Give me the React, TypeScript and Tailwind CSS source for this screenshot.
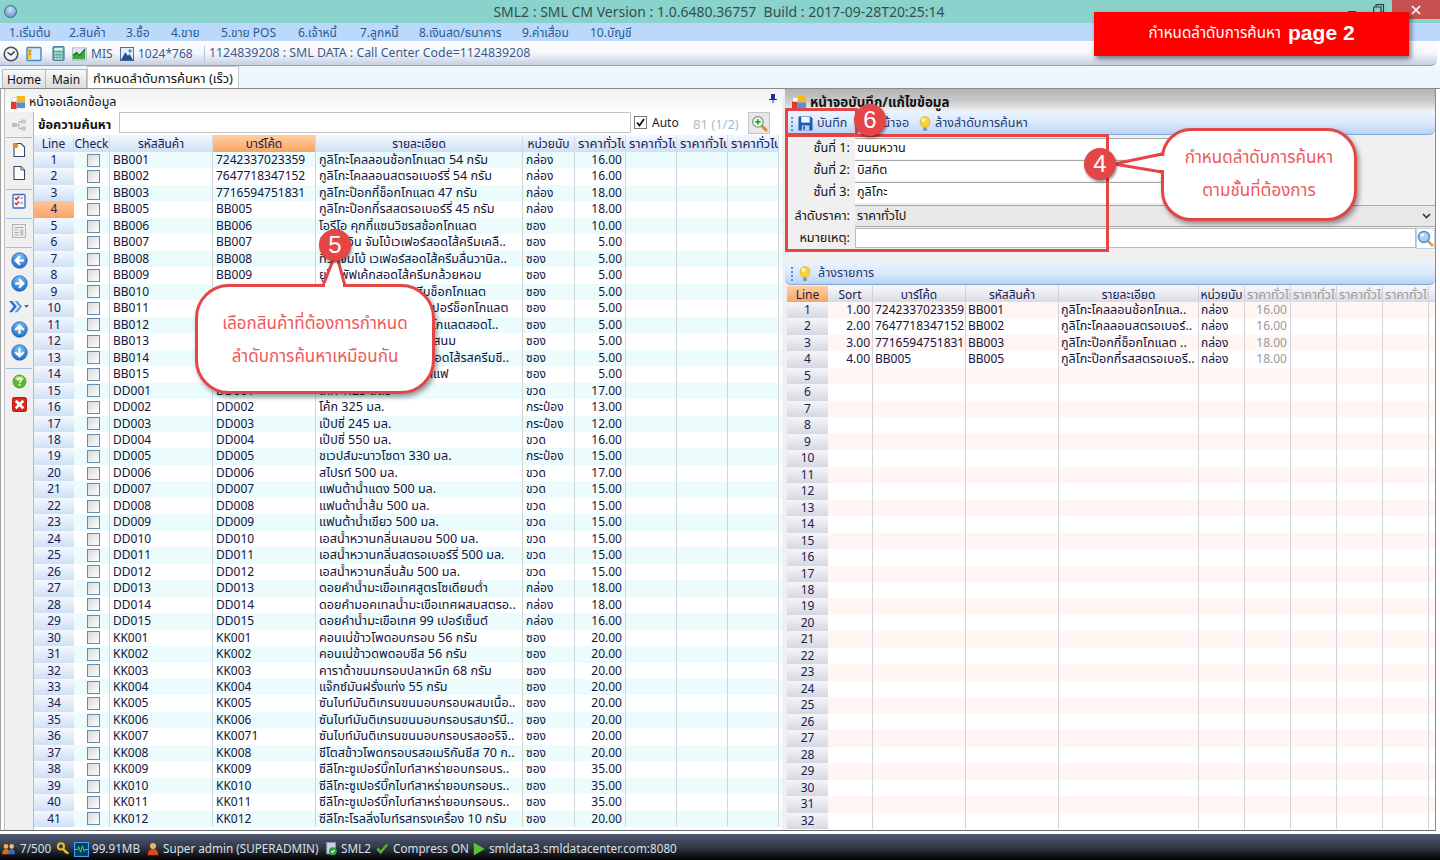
import React from "react";

const Svg = ({ s = 16, children }: { s?: number; children: React.ReactNode }) => (
  <svg width={s} height={s} viewBox="0 0 16 16" className="shrink-0 block">{children}</svg>
);
const Squares = () => (
  <Svg s={15}>
    <rect x="0" y="7" width="6" height="8" fill="#e03a2a" />
    <rect x="6" y="1" width="9" height="7" fill="#f4b820" />
    <rect x="6" y="8" width="9" height="6" fill="#5a8fdc" />
    <rect x="1" y="3" width="5" height="4" fill="#fff" stroke="#ccc" strokeWidth="0.5" />
  </Svg>
);
const Clock = () => (
  <Svg s={16}>
    <circle cx="8" cy="8" r="6.8" fill="#eef2f6" stroke="#44505c" strokeWidth="1.6" />
    <path d="M4.5 6.5 8 9l3.5-3.5" fill="none" stroke="#222" strokeWidth="1.2" />
  </Svg>
);
const PanelIcon = () => (
  <Svg s={16}>
    <rect x="1" y="1.5" width="14" height="13" rx="1" fill="#dcebfb" stroke="#3a8ad0" strokeWidth="1.4" />
    <rect x="2" y="3" width="3.6" height="10.5" fill="#f6c83c" />
    <circle cx="3.8" cy="5" r="0.8" fill="#c03020" />
    <circle cx="3.8" cy="8" r="0.8" fill="#c03020" />
  </Svg>
);
const Calc = () => (
  <Svg s={15}>
    <rect x="2" y="0.5" width="12" height="15" rx="1" fill="#5aa8a8" stroke="#4a7a9a" />
    <rect x="3.5" y="2" width="9" height="3" fill="#d8f0f0" />
    <path d="M4 7h2v1.5H4zM7 7h2v1.5H7zM10 7h2v1.5h-2zM4 10h2v1.5H4zM7 10h2v1.5H7zM10 10h2v1.5h-2zM4 12.8h2v1.5H4zM7 12.8h2v1.5H7zM10 12.8h2v1.5h-2z" fill="#e8f4d8" />
  </Svg>
);
const ChartI = () => (
  <Svg s={15}>
    <rect x="0.5" y="2" width="15" height="13" fill="#dfe8f2" stroke="#8a9ab0" strokeWidth="0.6" />
    <path d="M1 14V10l4-3 3 3 6-7v11z" fill="#3da83a" />
    <path d="M1 10l4-3 3 3 6-7" fill="none" stroke="#1d6d1c" strokeWidth="1.4" />
  </Svg>
);
const PicI = () => (
  <Svg s={14}>
    <rect x="0.5" y="0.5" width="15" height="15" fill="#e4eef9" stroke="#3c5c92" />
    <path d="M1 15 6 6l3 4 2-2 4 7z" fill="#2a4f90" />
    <circle cx="11.5" cy="4.5" r="2" fill="#5b8fd0" />
  </Svg>
);
const Net = () => (
  <Svg s={16}>
    <path d="M5 8h3M10 4.5H8v7h2" fill="none" stroke="#b0b0b0" />
    <rect x="1" y="6" width="5" height="4" fill="#bdbdbd" />
    <rect x="10" y="2.5" width="5" height="4" fill="#c8c8c8" />
    <rect x="10" y="9.5" width="5" height="4" fill="#c8c8c8" />
  </Svg>
);
const DocStar = () => (
  <Svg s={16}>
    <path d="M3 1.5h7l3.5 3.5v9.5H3z" fill="#fdfdf6" stroke="#334a70" strokeWidth="1.1" />
    <circle cx="4.5" cy="3.5" r="2.6" fill="#ef8a1e" />
  </Svg>
);
const Doc = () => (
  <Svg s={16}>
    <path d="M3 1.5h7l3.5 3.5v9.5H3z" fill="#fdfdfd" stroke="#334a70" strokeWidth="1.1" />
    <path d="M10 1.5V5h3.5" fill="#dfe6f0" stroke="#334a70" strokeWidth="0.9" />
  </Svg>
);
const Check = () => (
  <Svg s={16}>
    <rect x="2" y="1.5" width="12" height="13.5" rx="1" fill="#f6f6ff" stroke="#3a6ac0" strokeWidth="1.3" />
    <path d="M4 5l1.5 1.5L8 3.6M4 10l1.5 1.5L8 8.6" fill="none" stroke="#d8261e" strokeWidth="1.5" />
    <path d="M9 5h3M9 10h3" stroke="#6a7a9a" />
  </Svg>
);
const FormI = () => (
  <Svg s={16}>
    <rect x="1.5" y="1.5" width="13" height="13" fill="#f0f0f0" stroke="#b4b4b4" />
    <path d="M3.5 4h9v1h-9zM3.5 6.5h4v1h-4zM3.5 9h4v1h-4zM3.5 11.5h4v1h-4z" fill="#a8a8a8" />
    <rect x="9" y="6.5" width="3.5" height="6" fill="#c4c4c4" />
  </Svg>
);
const ArrowC = ({ d }: { d: string }) => (
  <Svg s={17}>
    <defs>
      <radialGradient id="abl" cx="50%" cy="25%" r="85%">
        <stop offset="0" stopColor="#7fc4fa" />
        <stop offset="1" stopColor="#0f5fc0" />
      </radialGradient>
    </defs>
    <circle cx="8" cy="8" r="7.3" fill="url(#abl)" stroke="#1a4f96" strokeWidth="0.6" />
    <path d={d} fill="none" stroke="#fff" strokeWidth="2.2" />
  </Svg>
);
const Dbl = () => (
  <div className="flex items-center ml-[-2px]">
    <Svg s={15}>
      <path d="M1 2h3.5l5 6-5 6H1l5-6z" fill="#2d6fd0" />
      <path d="M7 2h3l5 6-5 6H7l5-6z" fill="#5d9ae6" />
    </Svg>
    <svg width="5" height="3" className="ml-[1px]"><path d="M0 0h5L2.5 3z" fill="#5a6a88" /></svg>
  </div>
);
const Help = () => (
  <Svg s={15}>
    <circle cx="8" cy="8" r="7" fill="#5cb82e" stroke="#3a8a1c" strokeWidth="0.6" />
    <ellipse cx="8" cy="4.8" rx="4.5" ry="2.5" fill="#b4e690" />
    <path d="M6 6.5c0-2.5 4-2.5 4 0 0 1.5-2 1.5-2 3" fill="none" stroke="#fff" strokeWidth="1.4" />
    <circle cx="8" cy="11.5" r="1" fill="#fff" />
  </Svg>
);
const XI = () => (
  <Svg s={15}>
    <rect x="0.5" y="0.5" width="15" height="15" rx="2" fill="#e0261e" stroke="#a8140e" />
    <path d="M4 4l8 8M12 4l-8 8" stroke="#fff" strokeWidth="2.8" />
  </Svg>
);
const Floppy = () => (
  <Svg s={15}>
    <path d="M0.5 0.5h13l2 2v13H.5z" fill="#1e5cb8" />
    <rect x="3.5" y="1" width="9" height="6" fill="#f4f8ff" />
    <rect x="4" y="10" width="8" height="5.5" fill="#b8d0f0" />
    <rect x="5.5" y="11" width="2" height="3.5" fill="#1e5cb8" />
  </Svg>
);
const Bulb = () => (
  <Svg s={16}>
    <ellipse cx="8" cy="6" rx="5" ry="5.5" fill="#f8d23a" stroke="#dca818" strokeWidth="0.6" />
    <ellipse cx="6.5" cy="4" rx="2" ry="2" fill="#fff4b0" />
    <rect x="6" y="11.5" width="4" height="3.5" rx="0.8" fill="#8d96a8" />
  </Svg>
);
const Dots = () => (
  <div className="flex flex-col gap-[2px] w-[2px] shrink-0">
    {[0, 1, 2, 3].map((i) => (
      <span key={i} className="w-[2px] h-[2px] bg-[#5a8ed8] block" />
    ))}
  </div>
);
const Zoom = () => (
  <Svg s={17}>
    <path d="M9.5 9.5 15 15" stroke="#d88a28" strokeWidth="2.6" />
    <circle cx="6.5" cy="6.5" r="5" fill="#e8f8e8" stroke="#7a9a8a" strokeWidth="1.2" />
    <path d="M6.5 4v5M4 6.5h5" stroke="#1ea82a" strokeWidth="1.6" />
  </Svg>
);
const Glass = () => (
  <Svg s={17}>
    <path d="M10 10l5 5" stroke="#e0a040" strokeWidth="2.6" />
    <circle cx="6.5" cy="6.5" r="5.2" fill="#a8d0f4" stroke="#5a8cc8" strokeWidth="1.4" />
    <ellipse cx="5" cy="4.5" rx="2" ry="1.5" fill="#eef7ff" />
  </Svg>
);
const Users = () => (
  <Svg s={14}>
    <circle cx="4.5" cy="5" r="2.6" fill="#f2b448" />
    <path d="M0 14c0-4 2-6 4.500-6S9 10 9 14z" fill="#d86a20" />
    <circle cx="11" cy="5" r="2.6" fill="#f0c078" />
    <path d="M7 14c0-4 2-6 4-6s4 2 4 6z" fill="#3a6ab8" />
  </Svg>
);
const Key = () => (
  <Svg s={14}>
    <circle cx="4.5" cy="5" r="3.5" fill="none" stroke="#f0c020" strokeWidth="2.2" />
    <path d="M7 6.5l7 6-1.500 1.500-1.500-1-1 0.500-3.500-4z" fill="#f0b820" />
  </Svg>
);
const Monitor = () => (
  <Svg s={15}>
    <rect x="0.5" y="0.5" width="15" height="15" fill="#0a3a5a" stroke="#3aa0ff" strokeWidth="1.4" />
    <path d="M1 8h3l1-3 2 6 2-7 2 6 1-2h3" fill="none" stroke="#3ce070" />
  </Svg>
);
const UserI = () => (
  <Svg s={14}>
    <circle cx="8" cy="4.5" r="3.5" fill="#f0b070" />
    <path d="M2 15c0-5 2.500-7 6-7s6 2 6 7z" fill="#d8481e" />
  </Svg>
);
const DocOk = () => (
  <Svg s={14}>
    <rect x="2" y="0.5" width="10" height="13" fill="#c8d4e8" stroke="#8a9ab8" />
    <circle cx="9" cy="10.5" r="4.5" fill="#2aa040" />
    <path d="M7 10.5l1.500 1.500 2.500-3" fill="none" stroke="#fff" strokeWidth="1.2" />
  </Svg>
);
const CheckG = () => (
  <Svg s={14}>
    <path d="M1.5 8.5 4 6.500l2.500 3L13 2l2 1.500L6.500 14z" fill="#5cb034" />
  </Svg>
);
const Play = () => (
  <Svg s={14}>
    <path d="M2 0.5 14.500 8 2 15.500z" fill="#58c030" />
  </Svg>
);

const menu: [string, string][] = [
  ["1.เริ่มต้น", "w-[60px]"],
  ["2.สินค้า", "w-[57px]"],
  ["3.ซื้อ", "w-[45px]"],
  ["4.ขาย", "w-[50px]"],
  ["5.ขาย POS", "w-[77px]"],
  ["6.เจ้าหนี้", "w-[62px]"],
  ["7.ลูกหนี้", "w-[59px]"],
  ["8.เงินสด/ธนาคาร", "w-[103px]"],
  ["9.ค่าเสื่อม", "w-[68px]"],
  ["10.บัญชี", "w-[60px]"],
];

type Row = [string, string, string, string, string];
const bb = (c: string, d: string, p = "5.00", u = "ซอง", b?: string): Row => [c, b ?? c, d, u, p];
const rows: Row[] = [
  bb("BB001", "กูลิโกะโคลลอนช้อกโกแลต 54 กรัม", "16.00", "กล่อง", "7242337023359"),
  bb("BB002", "กูลิโกะโคลลอนสตรอเบอร์รี่ 54 กรัม", "16.00", "กล่อง", "7647718347152"),
  bb("BB003", "กูลิโกะป๊อกกี้ช็อกโกแลต 47 กรัม", "18.00", "กล่อง", "7716594751831"),
  bb("BB005", "กูลิโกะป๊อกกี้รสสตรอเบอร์รี่ 45 กรัม", "18.00", "กล่อง"),
  bb("BB006", "โอรีโอ คุกกี้แซนวิชรสช้อกโกแลต", "10.00"),
  bb("BB007", "ทิวลี่ทวิน จัมโบ้เวเฟอร์สอดไส้ครีมเคลื.."),
  bb("BB008", "ทิวลี่จัมโบ้ เวเฟอร์สอดไส้ครีมลื่นวานิล.."),
  bb("BB009", "ยูโร่ พัฟเค้กสอดไส้ครีมกล้วยหอม"),
  bb("BB010", "ยูโร่ พัฟเค้กสอดไส้ครีมช็อกโกแลต"),
  bb("BB011", "ยูโร่ คัสตาร์ดเค้กรสซุปเปอร์ช็อกโกแลต"),
  bb("BB012", "ทิวลี่เวเฟอร์ม้วนรสช็อกโกแลตสอดไ.."),
  bb("BB013", "เบรคโก้ เวเฟอร์สอดไส้รสนม"),
  bb("BB014", "เบรคโก้ เวเฟอร์เคลือบสอดไส้รสครีมชี.."),
  bb("BB015", "เบรคโก้ เวเฟอร์ไส้นมกาแฟ"),
  bb("DD001", "โค้ก 1.25 ลิตร", "17.00", "ขวด"),
  bb("DD002", "โค้ก 325 มล.", "13.00", "กระป๋อง"),
  bb("DD003", "เป๊ปซี่ 245 มล.", "12.00", "กระป๋อง"),
  bb("DD004", "เป๊ปซี่ 550 มล.", "16.00", "ขวด"),
  bb("DD005", "ชเวปส์มะนาวโซดา 330 มล.", "15.00", "กระป๋อง"),
  bb("DD006", "สไปรท์ 500 มล.", "17.00", "ขวด"),
  bb("DD007", "แฟนต้าน้ำแดง 500 มล.", "15.00", "ขวด"),
  bb("DD008", "แฟนต้าน้ำส้ม 500 มล.", "15.00", "ขวด"),
  bb("DD009", "แฟนต้าน้ำเขียว 500 มล.", "15.00", "ขวด"),
  bb("DD010", "เอสน้ำหวานกลิ่นเลมอน 500 มล.", "15.00", "ขวด"),
  bb("DD011", "เอสน้ำหวานกลิ่นสตรอเบอร์รี่ 500 มล.", "15.00", "ขวด"),
  bb("DD012", "เอสน้ำหวานกลิ่นส้ม 500 มล.", "15.00", "ขวด"),
  bb("DD013", "ดอยคำน้ำมะเขือเทศสูตรโซเดียมต่ำ", "18.00", "กล่อง"),
  bb("DD014", "ดอยคำมอคเทลน้ำมะเขือเทศผสมสตรอ..", "18.00", "กล่อง"),
  bb("DD015", "ดอยคำน้ำมะเขือเทศ 99 เปอร์เซ็นต์", "16.00", "กล่อง"),
  bb("KK001", "คอนเน่ข้าวโพดอบกรอบ 56 กรัม", "20.00"),
  bb("KK002", "คอนเน่ข้าวดพดอบชีส 56 กรัม", "20.00"),
  bb("KK003", "คาราด้าขนมกรอบปลาหมึก 68 กรัม", "20.00"),
  bb("KK004", "แจ๊กซ์มันฝรั่งแท่ง 55 กรัม", "20.00"),
  bb("KK005", "ซันไบท์มันติเกรนขนมอบกรอบผสมเนื้อ..", "20.00"),
  bb("KK006", "ซันไบท์มันติเกรนขนมอบกรอบรสบาร์บี..", "20.00"),
  bb("KK007", "ซันไบท์มันติเกรนขนมอบกรอบรสออริจิ..", "20.00", "ซอง", "KK0071"),
  bb("KK008", "ชีโตสข้าวโพดกรอบรสอเมริกันชีส 70 ก..", "20.00"),
  bb("KK009", "ซีลีโกะซูเปอร์บิ๊กไบท์สาหร่ายอบกรอบร..", "35.00"),
  bb("KK010", "ซีลีโกะซูเปอร์บิ๊กไบท์สาหร่ายอบกรอบร..", "35.00"),
  bb("KK011", "ซีลีโกะซูเปอร์บิ๊กไบท์สาหร่ายอบกรอบร..", "35.00"),
  bb("KK012", "ซีลีโกะโรลลิ่งไบท์รสทรงเครื่อง 10 กรัม", "20.00"),
];

const rRows = [
  ["1.00", "7242337023359", "BB001", "กูลิโกะโคลลอนช้อกโกแล..", "กล่อง", "16.00"],
  ["2.00", "7647718347152", "BB002", "กูลิโกะโคลลอนสตรอเบอร์..", "กล่อง", "16.00"],
  ["3.00", "7716594751831", "BB003", "กูลิโกะป๊อกกี้ช็อกโกแลต ..", "กล่อง", "18.00"],
  ["4.00", "BB005", "BB005", "กูลิโกะป๊อกกี้รสสตรอเบอรี..", "กล่อง", "18.00"],
];

const lh = "border-r border-[#d0dbe8] bg-gradient-to-b from-[#f4f8fe] to-[#cfe0f5] text-[#1a2050] text-center overflow-hidden whitespace-nowrap shrink-0 leading-[17px]";
const lhp = "border-r border-[#d0dbe8] bg-gradient-to-b from-[#f4f8fe] to-[#cfe0f5] text-[#1a2050] overflow-hidden whitespace-nowrap shrink-0 leading-[17px] text-[13px] pl-[3px]";
const LeftHead = () => (
  <div className="flex h-[17px] text-[12px]">
    <div className={`${lh} w-[40px]`}>Line</div>
    <div className={`${lh} w-[36px]`}>Check</div>
    <div className={`${lh} w-[103px]`}>รหัสสินค้า</div>
    <div className="w-[103px] shrink-0 text-center bg-gradient-to-b from-[#ffcf9e] to-[#f7a566] text-[#1a2050] leading-[17px] border-r border-[#d0dbe8]">บาร์โค้ด</div>
    <div className={`${lh} w-[207px]`}>รายละเอียด</div>
    <div className={`${lh} w-[52px]`}>หน่วยนับ</div>
    <div className={`${lhp} w-[51px]`}>ราคาทั่วไป</div>
    <div className={`${lhp} w-[51px]`}>ราคาทั่วไป</div>
    <div className={`${lhp} w-[51px]`}>ราคาทั่วไป</div>
    <div className={`${lhp} w-[51px]`}>ราคาทั่วไป</div>
  </div>
);

const LeftRow = ({ r, i }: { r: Row; i: number }) => {
  const tint = i % 2 === 0 ? "bg-[#ecfcfd]" : "bg-white";
  const cell = "border-r border-[#cfd6dc] overflow-hidden whitespace-nowrap shrink-0 pl-[3px] leading-[16px]";
  return (
    <div className={`flex h-[16.475px] text-[12px] text-[#14143c] ${tint}`}>
      <div className={`w-[40px] shrink-0 text-center leading-[16px] text-[#1a2050] ${i === 3 ? "bg-gradient-to-b from-[#ffc596] to-[#f7a56a]" : "bg-gradient-to-b from-[#f4f8fe] to-[#cfe0f5]"}`}>{i + 1}</div>
      <div className="w-[36px] shrink-0 flex items-center justify-center border-r border-[#cfd6dc] pl-[3px]">
        <span className="w-[13px] h-[13px] border border-[#6b8aa8] bg-gradient-to-br from-[#d8d8d8] to-white block" />
      </div>
      <div className={`${cell} w-[103px]`}>{r[0]}</div>
      <div className={`${cell} w-[103px]`}>{r[1]}</div>
      <div className={`${cell} w-[207px] text-[12.6px]`}>{r[2]}</div>
      <div className={`${cell} w-[52px]`}>{r[3]}</div>
      <div className={`${cell} w-[51px] text-right pr-[3px]`}>{r[4]}</div>
      <div className={`${cell} w-[51px]`} />
      <div className={`${cell} w-[51px]`} />
      <div className={`${cell} w-[51px]`} />
    </div>
  );
};

const rh = "border-r border-[#cfd2da] text-center overflow-hidden whitespace-nowrap shrink-0 leading-[17px] text-[#1a2050]";
const rhg = "border-r border-[#cfd2da] overflow-hidden whitespace-nowrap shrink-0 leading-[17px] text-[#9a9a9a] text-[12.6px] pl-[2px]";
const RightHead = () => (
  <div className="flex h-[16px] text-[12px] bg-gradient-to-b from-[#f8f8fb] to-[#d9dce6]">
    <div className="w-[41px] shrink-0 text-center leading-[17px] text-[#1a2050] bg-gradient-to-b from-[#ffcf9e] to-[#f7a566]">Line</div>
    <div className={`${rh} w-[45px]`}>Sort</div>
    <div className={`${rh} w-[93px]`}>บาร์โค้ด</div>
    <div className={`${rh} w-[93px]`}>รหัสสินค้า</div>
    <div className={`${rh} w-[140px]`}>รายละเอียด</div>
    <div className={`${rh} w-[46px]`}>หน่วยนับ</div>
    <div className={`${rhg} w-[46px]`}>ราคาทั่วไป</div>
    <div className={`${rhg} w-[46px]`}>ราคาทั่วไป</div>
    <div className={`${rhg} w-[46px]`}>ราคาทั่วไป</div>
    <div className={`${rhg} w-[46px]`}>ราคาทั่วไป</div>
  </div>
);
const RightRow = ({ i }: { i: number }) => {
  const r = rRows[i] ?? ["", "", "", "", "", ""];
  const tint = i % 2 === 0 ? "bg-[#fff6f3]" : "bg-white";
  const cell = "border-r border-[#d4d4d8] overflow-hidden whitespace-nowrap shrink-0 leading-[16px]";
  return (
    <div className={`flex h-[16.48px] text-[12px] text-[#14143c] ${tint}`}>
      <div className="w-[41px] shrink-0 text-center leading-[16px] text-[#1a2050] bg-gradient-to-b from-[#f6f6f9] to-[#d5d8e2]">{i + 1}</div>
      <div className={`${cell} w-[45px] text-right pr-[2px]`}>{r[0]}</div>
      <div className={`${cell} w-[93px] pl-[2px]`}>{r[1]}</div>
      <div className={`${cell} w-[93px] pl-[2px]`}>{r[2]}</div>
      <div className={`${cell} w-[140px] pl-[2px] text-[12.6px]`}>{r[3]}</div>
      <div className={`${cell} w-[46px] pl-[2px]`}>{r[4]}</div>
      <div className={`${cell} w-[46px] text-right pr-[3px] text-[#9a9a9a]`}>{r[5]}</div>
      <div className={`${cell} w-[46px]`} />
      <div className={`${cell} w-[46px]`} />
      <div className={`${cell} w-[46px]`} />
    </div>
  );
};

const SideItem = ({ h, children }: { h: string; children?: React.ReactNode }) => (
  <div className={`${h} flex items-center justify-center shrink-0`}>{children}</div>
);
const Sep = () => <div className="h-[1px] bg-[#9ec0e6] mx-[1px] shrink-0" />;

const FormRow = ({ label, value }: { label: string; value: string }) => (
  <div className="flex items-center h-[22px]">
    <div className="w-[65px] text-right text-[12.7px] text-[#111] pr-[2px] whitespace-nowrap">{label}</div>
    <div className="ml-[3px] w-[315px] h-[21px] bg-white border-t border-[#a9a9a9] pl-[2px] text-[12.6px] leading-[18px] text-[#111]">{value}</div>
  </div>
);

const ToolBlue = ({ children, cls }: { children: React.ReactNode; cls: string }) => (
  <div className={`${cls} flex items-center pt-[1px] bg-gradient-to-b from-[#eaf3ff] via-[#dbe9fc] to-[#b9d2f3] rounded-br-[6px] rounded-bl-[6px] border-b border-[#7fa8dc] text-[12.5px] text-[#1e3a72]`}>
    {children}
  </div>
);

const Circle = ({ n, cls }: { n: string; cls: string }) => (
  <div className={`${cls} absolute w-[32px] h-[32px] rounded-full bg-[#e64545] text-white text-[24px] leading-[32px] text-center font-['Liberation_Sans',sans-serif] shadow-[1px_2px_3px_rgba(0,0,0,0.45)]`}>{n}</div>
);

export default function App() {
  return (
    <div className="relative w-[1440px] h-[860px] overflow-hidden bg-white font-['Noto_Sans','Noto_Sans_Thai','DejaVu_Sans',sans-serif]">
      {/* title */}
      <div className="h-[23px] bg-[#8ad2cc] flex items-center relative">
        <div className="ml-[4px] w-[13px] h-[13px] rounded-full bg-[radial-gradient(circle_at_50%_35%,#cfe2f6,#4f86c0)] border border-[#3f6a96] shrink-0" />
        <div className="absolute left-0 right-0 top-0 text-center text-[14px] leading-[23px] text-[#33504f] ml-[-2px]">SML2 : SML CM Version : 1.0.6480.36757&nbsp; Build : 2017-09-28T20:25:14</div>
        <div className="absolute right-0 top-0 w-[48px] h-[19px] bg-[#c75050] flex items-center justify-center">
          <svg width="10" height="10"><path d="M1 1l8 8M9 1l-8 8" stroke="#fff" strokeWidth="1.6" /></svg>
        </div>
        <svg width="12" height="11" className="absolute left-[1373px] top-[4px]"><path d="M3 3V0.7h7.500V8H8M0.7 3h7.300v7.300H0.7z" fill="none" stroke="#2f3f3f" strokeWidth="1.2" /></svg>
        <div className="absolute left-[1348px] top-[11px] w-[8px] h-[1px] bg-[#2f3f3f]" />
      </div>
      {/* menu */}
      <div className="h-[18px] bg-[#bcd9fb] flex pl-[9px] text-[12px] leading-[20px] text-[#2a5a94]">
        {menu.map(([t, w]) => (
          <div key={t} className={`${w} shrink-0 whitespace-nowrap`}>{t}</div>
        ))}
      </div>
      {/* toolbar */}
      <div className="h-[25px] bg-gradient-to-b from-white via-[#f4f6fa] to-[#c6d0e2] border-b border-[#7aa8e0] rounded-br-[6px] mr-[3px] flex items-center text-[12px] text-[#3a5a8e] pl-[2px] pt-[1px]">
        <div className="w-[18px] flex justify-center"><Clock /></div>
        <div className="ml-[6px]"><PanelIcon /></div>
        <div className="ml-[9px]"><Calc /></div>
        <div className="ml-[6px]"><ChartI /></div>
        <span className="ml-[4px] w-[29px]">MIS</span>
        <PicI />
        <span className="ml-[4px] w-[66px] whitespace-nowrap">1024*768</span>
        <div className="w-[1px] h-[16px] bg-[#b4c4dc] mr-[4px]" />
        <span className="whitespace-nowrap text-[12.35px]">1124839208 : SML DATA : Call Center Code=1124839208</span>
      </div>
      {/* tabs */}
      <div className="h-[23px] bg-[#eef6fe] flex items-end pl-[2px] border-b border-[#8a8a8a] text-[12px] text-[#111]">
        <div className="w-[44px] h-[19px] bg-gradient-to-b from-[#f8f8f8] to-[#dcdcdc] border border-b-0 border-[#b8b8b8] text-center leading-[19px]">Home</div>
        <div className="w-[41px] h-[19px] bg-gradient-to-b from-[#f8f8f8] to-[#dcdcdc] border border-b-0 border-l-0 border-[#b8b8b8] text-center leading-[19px]">Main</div>
        <div className="w-[152px] h-[22px] bg-white border border-b-0 border-[#c8c8c8] text-center leading-[22px] text-[12.9px] whitespace-nowrap">กำหนดลำดับการค้นหา (เร็ว)</div>
      </div>
      {/* main */}
      <div className="h-[745px] bg-white">
        <div className="w-[1436px] h-[742px] flex border-b border-[#6a6a6a] border-l border-l-[#a0a0a0] border-r border-r-[#8a8a8a] overflow-hidden bg-[#f0f0f0]">
          {/* left panel */}
          <div className="w-[781px] shrink-0 pl-[3px] h-full flex flex-col bg-white">
            <div className="h-[23px] shrink-0 flex items-center pl-[6px] pt-[3px] text-[12.4px] text-[#111] relative bg-gradient-to-b from-[#f0f0f0] to-white border-l border-[#c0c0c0]">
              <Squares />
              <span className="ml-[3px]">หน้าจอเลือกข้อมูล</span>
              <svg width="8" height="9" className="absolute left-[764px] top-[5px]"><path d="M2 0h4v5h2v1H4.5v3h-1V6H0V5h2z" fill="#1a2f9a" /></svg>
            </div>
            <div className="flex flex-1 min-h-0">
              <div className="w-[30px] shrink-0 bg-[#f0f0f0] border-l border-[#c0c0c0] border-r border-r-[#9ec0e6] flex flex-col">
                <SideItem h="h-[25px]"><Net /></SideItem>
                <Sep />
                <SideItem h="h-[24px]"><DocStar /></SideItem>
                <SideItem h="h-[22px]"><Doc /></SideItem>
                <SideItem h="h-[5px]" />
                <Sep />
                <SideItem h="h-[22px]"><Check /></SideItem>
                <SideItem h="h-[6px]" />
                <Sep />
                <SideItem h="h-[24px]"><FormI /></SideItem>
                <SideItem h="h-[4px]" />
                <Sep />
                <SideItem h="h-[24px]"><ArrowC d="M8.5 4 4.500 8l4 4M5 8h7" /></SideItem>
                <SideItem h="h-[23px]"><ArrowC d="M7.500 4l4 4-4 4M11 8H4" /></SideItem>
                <SideItem h="h-[23px]"><Dbl /></SideItem>
                <SideItem h="h-[23px]"><ArrowC d="M4 8.500l4-4 4 4M8 5v7" /></SideItem>
                <SideItem h="h-[22px]"><ArrowC d="M4 7.500l4 4 4-4M8 11V4" /></SideItem>
                <SideItem h="h-[5px]" />
                <Sep />
                <SideItem h="h-[24px]"><Help /></SideItem>
                <SideItem h="h-[23px]"><XI /></SideItem>
              </div>
              <div className="flex-1 min-w-0 flex flex-col overflow-hidden">
                <div className="h-[23px] shrink-0 flex items-start relative text-[12px]">
                  <span className="ml-[4px] mt-[3px] font-bold text-[12.7px] text-[#111] w-[81px] whitespace-nowrap">ข้อความค้นหา</span>
                  <div className="w-[512px] h-[21px] bg-white border border-[#c4c4c4]" />
                  <span className="ml-[3px] mt-[4px] w-[13px] h-[13px] border border-[#777] bg-white flex items-center justify-center">
                    <svg width="9" height="9"><path d="M1 4.500 3.500 7.500 8 1" fill="none" stroke="#111" strokeWidth="1.8" /></svg>
                  </span>
                  <span className="ml-[5px] mt-[2px] w-[41px] text-[#222]">Auto</span>
                  <span className="mt-[3px] w-[55px] whitespace-nowrap text-[#a9bccf] text-[13px]">81 (1/2)</span>
                  <div className="w-[22px] h-[22px] bg-[#e8e8e8] border border-[#c4c4c4] flex items-center justify-center"><Zoom /></div>
                </div>
                <LeftHead />
                <div className="flex-1 overflow-hidden">
                  {rows.map((r, i) => <LeftRow key={i} r={r} i={i} />)}
                </div>
              </div>
            </div>
          </div>
          {/* right panel */}
          <div className="flex-1 min-w-0 flex flex-col bg-[#f0f0f0] pl-[3px]">
            <div className="h-[23px] shrink-0 flex items-center pl-[7px] pt-[3px] text-[13.4px] font-bold text-[#111] bg-gradient-to-b from-[#b4b4b4] via-[#c8c8c8] to-[#f4f4f4] whitespace-nowrap">
              <Squares />
              <span className="ml-[3px]">หน้าจอบันทึก/แก้ไขข้อมูล</span>
            </div>
            <ToolBlue cls="h-[23px] shrink-0 pl-[6px]">
              <Dots />
              <div className="ml-[5px]"><Floppy /></div>
              <span className="ml-[4px] w-[43px] whitespace-nowrap">บันทึก</span>
              <span className="w-[57px] whitespace-nowrap">ปิดหน้าจอ</span>
              <Bulb />
              <span className="ml-[2px] whitespace-nowrap">ล้างลำดับการค้นหา</span>
            </ToolBlue>
            <div className="h-[127px] shrink-0 pt-[2px] pl-[2px]">
              <FormRow label="ชั้นที่ 1:" value="ขนมหวาน" />
              <FormRow label="ชั้นที่ 2:" value="บิสกิต" />
              <FormRow label="ชั้นที่ 3:" value="กูลิโกะ" />
              <div className="flex items-center h-[22px] mt-[2px]">
                <div className="w-[65px] text-right text-[12.7px] text-[#111] pr-[2px] whitespace-nowrap">ลำดับราคา:</div>
                <div className="ml-[3px] flex-1 h-[22px] bg-[#e8e8e8] border-t border-b border-[#a9a9a9] pl-[2px] pr-[4px] text-[12.6px] leading-[20px] text-[#111] flex justify-between items-center">
                  <span>ราคาทั่วไป</span>
                  <svg width="9" height="6"><path d="M1 1l3.500 3.500L8 1" fill="none" stroke="#333" strokeWidth="1.6" /></svg>
                </div>
              </div>
              <div className="flex items-center h-[22px]">
                <div className="w-[65px] text-right text-[12.7px] text-[#111] pr-[2px] whitespace-nowrap">หมายเหตุ:</div>
                <div className="ml-[3px] flex-1 h-[20px] bg-white border border-[#bcbcbc]" />
                <div className="w-[19px] h-[21px] shrink-0 flex items-center justify-center bg-white border border-[#c4d0de]"><Glass /></div>
              </div>
            </div>
            <ToolBlue cls="h-[23px] shrink-0 pl-[6px]">
              <Dots />
              <div className="ml-[4px]"><Bulb /></div>
              <span className="ml-[5px]">ล้างรายการ</span>
            </ToolBlue>
            <div className="flex-1 overflow-hidden bg-white mt-[1px] ml-[2px]">
              <RightHead />
              {Array.from({ length: 32 }).map((_, i) => <RightRow key={i} i={i} />)}
            </div>
          </div>
        </div>
      </div>
      {/* status */}
      <div className="absolute left-0 right-0 top-[834px] h-[26px] bg-gradient-to-b from-[#4e5a72] via-[#333a48] to-[#040404] flex items-center text-[11.7px] text-[#d8e0ea] pl-[2px] pt-[4px] whitespace-nowrap">
        <Users />
        <span className="ml-[4px] w-[37px]">7/500</span>
        <Key />
        <div className="ml-[3px]"><Monitor /></div>
        <span className="ml-[3px] w-[54px]">99.91MB</span>
        <UserI />
        <span className="ml-[3px] w-[162px]">Super admin (SUPERADMIN)</span>
        <DocOk />
        <span className="ml-[2px] w-[34px]">SML2</span>
        <CheckG />
        <span className="ml-[4px] w-[79px]">Compress ON</span>
        <Play />
        <span className="ml-[3px]">smldata3.smldatacenter.com:8080</span>
      </div>

      {/* overlays */}
      <div className="absolute left-[1094px] top-[12px] w-[315px] h-[44px] bg-[#ff0000] shadow-[2px_3px_5px_rgba(0,0,30,0.5)] flex items-center justify-center text-white pb-[3px]">
        <span className="text-[15.2px]">กำหนดลำดับการค้นหา</span>
        <span className="ml-[7px] text-[21px] font-bold font-['Liberation_Sans',sans-serif]">page 2</span>
      </div>
      <div className="absolute left-[785px] top-[108px] w-[73px] h-[28px] border-[3px] border-[#e64545]" />
      <div className="absolute left-[785px] top-[134px] w-[324px] h-[118px] border-[3px] border-[#e64545]" />

      {/* bubble 5 */}
      <svg width="36" height="50" className="absolute left-[317px] top-[248px] z-[1]">
        <path d="M16 12 6 38h22L21 12z" fill="#fff" stroke="#e64545" strokeWidth="3" />
      </svg>
      <div className="absolute z-[2] left-[195px] top-[284px] w-[240px] h-[110px] rounded-[34px] bg-white border-[3px] border-[#e64545] shadow-[2px_3px_5px_rgba(0,0,0,0.4)] flex flex-col items-center justify-center text-[17px] leading-[33px] text-[#f0585c] whitespace-nowrap">
        <span>เลือกสินค้าที่ต้องการกำหนด</span>
        <span>ลำดับการค้นหาเหมือนกัน</span>
      </div>
      <div className="absolute z-[3] left-[325px] top-[283px] w-[18px] h-[6px] bg-white" />
      <Circle n="5" cls="left-[319px] top-[229px] z-[3]" />

      {/* bubble 4 */}
      <svg width="56" height="30" className="absolute left-[1112px] top-[150px] z-[1]">
        <path d="M50 4 2 14 50 22z" fill="#fff" stroke="#e64545" strokeWidth="3" />
      </svg>
      <div className="absolute z-[2] left-[1161px] top-[128px] w-[196px] h-[93px] rounded-[30px] bg-white border-[3px] border-[#e64545] shadow-[2px_3px_5px_rgba(0,0,0,0.4)] flex flex-col items-center justify-center text-[17px] leading-[33px] text-[#f0585c] pb-[4px] whitespace-nowrap">
        <span>กำหนดลำดับการค้นหา</span>
        <span>ตามชั้นที่ต้องการ</span>
      </div>
      <div className="absolute z-[3] left-[1160px] top-[156px] w-[6px] h-[14px] bg-white" />
      <Circle n="4" cls="left-[1084px] top-[148px] z-[3]" />
      <Circle n="6" cls="left-[854px] top-[104px] z-[3]" />
    </div>
  );
}
